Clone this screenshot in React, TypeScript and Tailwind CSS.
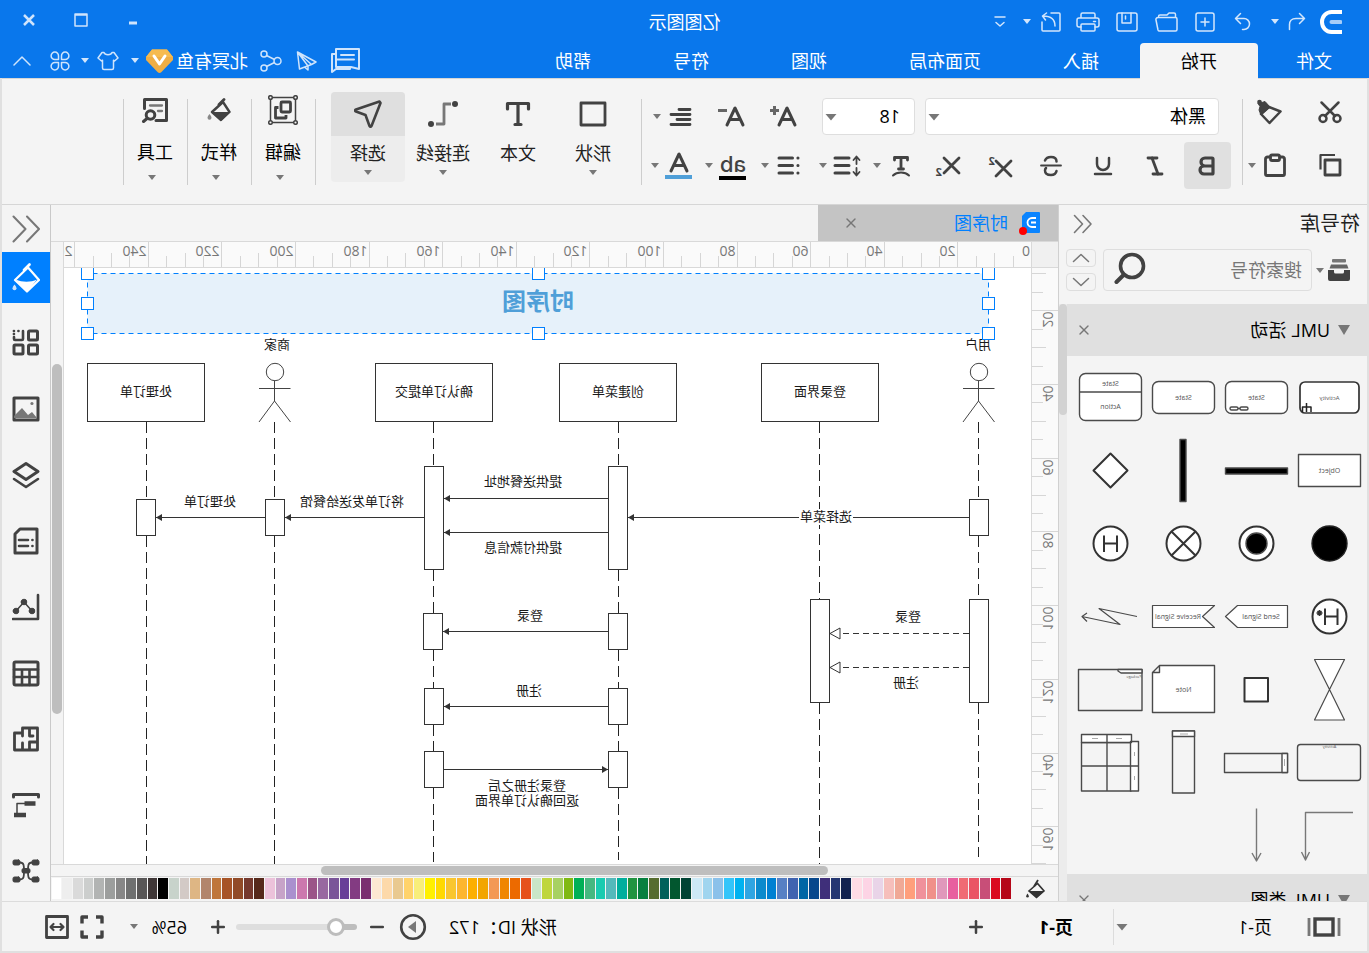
import React from "react";
import {
  Bold,
  Italic,
  Underline,
  X,
  Plus,
  Minus,
} from "lucide-react";

type Kids = { children?: React.ReactNode };

/* ---------- small shared pieces ---------- */

function Caret({ big = false, className = "fill-[#777]" }: { big?: boolean; className?: string }) {
  return big ? (
    <svg width="12" height="8" viewBox="0 0 12 8" className={className} aria-hidden="true">
      <path d="M.5 1h11L6 7.500z" />
    </svg>
  ) : (
    <svg width="8" height="5" viewBox="0 0 8 5" className={className} aria-hidden="true">
      <path d="M0 0h8L4 5z" />
    </svg>
  );
}

function Icon({
  w = 24,
  h = 24,
  sw = 1.5,
  children,
}: Kids & { w?: number; h?: number; sw?: number }) {
  return (
    <svg
      width={w}
      height={h}
      viewBox={`0 0 ${w} ${h}`}
      fill="none"
      stroke="currentColor"
      strokeWidth={sw}
      strokeLinecap="round"
      strokeLinejoin="round"
      aria-hidden="true"
      className="shrink-0"
    >
      {children}
    </svg>
  );
}

function Tool({ label, className = "", children }: Kids & { label: string; className?: string }) {
  return (
    <button type="button" aria-label={label} className={`flex shrink-0 items-center justify-center ${className}`}>
      {children}
    </button>
  );
}

/* ---------- title bar and menu ---------- */

function Header() {
  return (
    <header className="shrink-0 bg-[#0977ec] text-white">
      <div className="grid h-[43px] grid-cols-[1fr_auto_1fr] items-center">
        <div className="flex items-center pl-5 text-[#d3e6fc]">
          <div className="flex w-9 justify-center">
            <svg width="22" height="24" viewBox="0 0 22 24" fill="none" aria-hidden="true">
              <path d="M0 2h10.500a9.500 10 0 0 1 0 20H0" stroke="#fff" strokeWidth="4" />
              <path d="M1.500 12h9" stroke="#a6cdf8" strokeWidth="4" strokeLinecap="round" />
            </svg>
          </div>
          <Tool label="撤销" className="w-8">
            <Icon w={18} h={20}>
              <path d="M6.500 1.500 1.500 6.500l5 5M1.500 6.500H10c4.500 0 6.500 3 6.500 6v5" />
            </Icon>
          </Tool>
          <Tool label="撤销列表" className="w-3">
            <Caret className="fill-[#d3e6fc]" />
          </Tool>
          <Tool label="恢复" className="ml-2 w-9">
            <Icon w={18} h={20}>
              <path d="m11.500 1.500 5 5-5 5M16.500 6.500H8a5.500 5.500 0 0 0 0 11h1.500" />
            </Icon>
          </Tool>
          <Tool label="新建" className="w-[39px]">
            <Icon w={20} h={20}>
              <rect x="1" y="1" width="18" height="18" rx="2" />
              <path d="M10 6v8M6 10h8" />
            </Icon>
          </Tool>
          <Tool label="打开" className="w-[39px]">
            <Icon w={23} h={20}>
              <path d="M2.500 19a1.500 1.500 0 0 1-1.500-1.500V7a1.500 1.500 0 0 1 1.500-1.500H20a2 2 0 0 1 2 2.500l-2 10a1.500 1.500 0 0 1-1.500 1zM2.500 5.500V2.500A1.500 1.500 0 0 1 4 1h5l2 2h7a1.500 1.500 0 0 1 1.500 1.500v1" />
            </Icon>
          </Tool>
          <Tool label="保存" className="w-[39px]">
            <Icon w={22} h={20}>
              <rect x="1" y="1" width="20" height="18" rx="2" />
              <path d="M7 1v10h9V1M12.500 4v3" />
            </Icon>
          </Tool>
          <Tool label="打印" className="w-[39px]">
            <Icon w={24} h={20}>
              <path d="M5 6V2.500A1.500 1.500 0 0 1 6.500 1h11A1.500 1.500 0 0 1 19 2.500V6M5 15H3a2 2 0 0 1-2-2V8a2 2 0 0 1 2-2h18a2 2 0 0 1 2 2v5a2 2 0 0 1-2 2h-2M4.500 9.500h2" />
              <rect x="5" y="12" width="14" height="7" rx="1" />
            </Icon>
          </Tool>
          <Tool label="导出" className="w-9">
            <Icon w={20} h={20}>
              <path d="M10 1H2a1 1 0 0 0-1 1v16a1 1 0 0 0 1 1h16a1 1 0 0 0 1-1v-8M6 14c0-7 4-10 12-10M14.500 1 18.500 4l-3 4" />
            </Icon>
          </Tool>
          <Tool label="导出列表" className="w-3">
            <Caret className="fill-[#d3e6fc]" />
          </Tool>
          <Tool label="自定义工具栏" className="w-[42px]">
            <Icon w={12} h={12}>
              <path d="M1 1h10M2 6.500l4 3.500 4-3.500" />
            </Icon>
          </Tool>
        </div>
        <h1 className="text-[18px] leading-6">亿图图示</h1>
        <div className="flex items-center justify-end self-start pr-[3px] text-[#cfe4fc]">
          <Tool label="最小化" className="h-10 w-[52px]">
            <Icon w={10} h={10} sw={3}>
              <path d="M1 8h8" strokeLinecap="butt" />
            </Icon>
          </Tool>
          <Tool label="最大化" className="h-[38px] w-[52px]">
            <Icon w={14} h={14} sw={1.5}>
              <path d="M1 1h12v12H1zM1 2h12" />
            </Icon>
          </Tool>
          <Tool label="关闭" className="h-[38px] w-[52px]">
            <Icon w={12} h={12} sw={2.5}>
              <path d="m1 1 10 10M11 1 1 11" strokeLinecap="butt" />
            </Icon>
          </Tool>
        </div>
      </div>

      <div className="flex h-[35px]">
        <nav className="flex text-[18px] leading-6">
          <a href="#file" className="flex items-center px-[37px]">文件</a>
          <a
            href="#home"
            aria-current="page"
            className="relative z-10 -mb-px ml-px flex items-center rounded-t-sm bg-[#f4f4f4] px-[41px] text-black"
          >
            开始
          </a>
          {["插入", "页面布局", "视图", "符号", "帮助"].map((t) => (
            <a key={t} href={`#${t}`} className="flex items-center px-[41px]">
              {t}
            </a>
          ))}
        </nav>
        <div className="ml-auto flex items-center pr-[3px] text-[#cfe4fc]">
          <Tool label="评论" className="w-[42px]">
            <Icon w={31} h={27} sw={2}>
              <path d="M2 2h23v18H10l-8 2zM26 7h3v18l-4-3H11v-1M7 8h13M7 12.500h17" />
            </Icon>
          </Tool>
          <Tool label="发送" className="w-9">
            <Icon w={21} h={20}>
              <path d="M19.500 1 1 11l4.500 2.500L17.500 18zM19.500 1 5.500 13.500M19.500 1 9 15v4l3-2.500" />
            </Icon>
          </Tool>
          <Tool label="共享" className="w-9">
            <Icon w={22} h={22}>
              <circle cx="4.500" cy="11" r="3.500" />
              <circle cx="18" cy="4" r="3" />
              <circle cx="18" cy="18" r="3" />
              <path d="M7.500 9.500 15.500 5.500M7.500 12.500l8 4" />
            </Icon>
          </Tool>
          <button type="button" className="ml-[5px] flex items-center gap-[3px] text-white">
            <span className="text-[18px] leading-6">北冥有鱼</span>
            <svg width="27" height="24" viewBox="0 0 27 24" aria-hidden="true">
              <path d="M6 .5h15l6 7.500v3L15.500 23a3 3 0 0 1-4 0L0 11V8z" fill="#efae45" />
              <path d="M6 .5h15l6 7.500H0z" fill="#f6bb50" />
              <path d="m8 7 5.500 8L19 7" fill="none" stroke="#fff" strokeWidth="3" strokeLinecap="round" strokeLinejoin="round" />
            </svg>
          </button>
          <Tool label="账户列表" className="ml-[5px] w-3">
            <Caret className="fill-[#d3e6fc]" />
          </Tool>
          <Tool label="皮肤" className="ml-1 w-[34px]">
            <Icon w={22} h={20}>
              <path d="M7 1.500c1 3 7 3 8 0l2 0L21 7l-3.500 3-1-.8V17a1.500 1.500 0 0 1-1.500 1.500H7A1.500 1.500 0 0 1 5.500 17V9.200l-1 .8L1 7l4-5.500z" />
            </Icon>
          </Tool>
          <Tool label="皮肤列表" className="w-3">
            <Caret className="fill-[#d3e6fc]" />
          </Tool>
          <Tool label="应用" className="w-[38px]">
            <Icon w={20} h={20}>
              <path d="M8.500 8.500H5A3.700 3.700 0 1 1 8.500 5zM11.500 8.500H15A3.700 3.700 0 1 0 11.500 5zM8.500 11.500H5A3.700 3.700 0 1 0 8.500 15zM11.500 11.500H15A3.700 3.700 0 1 1 11.500 15z" />
            </Icon>
          </Tool>
          <Tool label="收起功能区" className="w-[38px]">
            <Icon w={18} h={10}>
              <path d="m1 9 8-8 8 8" />
            </Icon>
          </Tool>
        </div>
      </div>
    </header>
  );
}

/* ---------- ribbon ---------- */

function Divider() {
  return <div className="mt-[20px] h-[86px] w-px shrink-0 bg-[#cdcdcd]" />;
}

function Split({ label, className = "", children }: Kids & { label: string; className?: string }) {
  return (
    <div className={`flex items-center ${className}`}>
      <Tool label={label} className="h-9 w-9">
        {children}
      </Tool>
      <Tool label={`${label}选项`} className="h-9 w-3">
        <Caret />
      </Tool>
    </div>
  );
}

function BigTool({
  label,
  active = false,
  caret = true,
  children,
}: Kids & { label: string; active?: boolean; caret?: boolean }) {
  return (
    <button
      type="button"
      className={`flex h-[90px] w-[74px] flex-col items-center rounded-sm ${active ? "bg-[#ededed]" : ""}`}
    >
      <span className={`flex h-11 w-full items-center justify-center rounded-t-sm ${active ? "bg-[#dfdfdf]" : ""}`}>
        {children}
      </span>
      <span className="mt-[5px] text-[18px] leading-6 text-[#222]">{label}</span>
      {caret && (
        <span className="mt-[5px] flex">
          <Caret />
        </span>
      )}
    </button>
  );
}

function MenuTool({ label, children }: Kids & { label: string }) {
  return (
    <button type="button" className="flex h-[106px] w-[63px] flex-col items-center pt-[13px] pl-px">
      <span className="flex h-9 items-center justify-center">{children}</span>
      <span className="mt-[12px] text-[18px] leading-6 text-black">{label}</span>
      <span className="ml-1.5 mt-[11px] flex">
        <Caret />
      </span>
    </button>
  );
}

function Select({ label, value, className }: { label: string; value: string; className: string }) {
  return (
    <div className="relative flex h-[37px] items-center">
      <select
        aria-label={label}
        defaultValue={value}
        className={`h-full appearance-none rounded-sm border border-[#dedede] bg-white text-[18px] text-black ${className}`}
      >
        <option>{value}</option>
      </select>
      <span className="pointer-events-none absolute right-[3px] flex">
        <Caret big />
      </span>
    </div>
  );
}

function LetterA() {
  return (
    <svg width="20" height="21" viewBox="0 0 20 21" fill="none" stroke="currentColor" strokeWidth="3" strokeLinecap="round" strokeLinejoin="round" aria-hidden="true">
      <path d="M2 19 10 2l8 17M5.500 13.500h9" />
    </svg>
  );
}

function Ribbon() {
  return (
    <section aria-label="开始" className="flex h-[127px] shrink-0 border-b border-t border-[#d6d6d6] bg-[#f4f4f4] text-[#424242]">
      <div className="flex w-[124px] shrink-0 flex-col gap-[7px] pl-[15px] pt-[14px]">
        <div className="flex h-[37px] items-center gap-4">
          <Tool label="剪切" className="w-11">
            <Icon w={24} h={24} sw={2.5}>
              <circle cx="5" cy="18.500" r="3.500" />
              <circle cx="19" cy="18.500" r="3.500" />
              <path d="M3.500 2.500 17 16M20.500 2.500 7 16" />
            </Icon>
          </Tool>
          <Tool label="格式刷" className="w-11">
            <svg width="26" height="26" viewBox="0 0 26 26" fill="none" stroke="currentColor" aria-hidden="true">
              <path d="M2.500 12.500 14 8l8 7-8.500 9z" strokeWidth="2.500" strokeLinejoin="round" />
              <path d="m13 8 5-5.500 3 1 2.500-1.500 1.500 2.500-2 3 1 3.500-2 5z" fill="currentColor" strokeLinejoin="round" />
              <circle cx="23.500" cy="3" r="2.300" fill="currentColor" stroke="none" />
            </svg>
          </Tool>
        </div>
        <div className="flex h-[54px] items-center gap-4 pt-0.5">
          <Tool label="复制" className="w-11">
            <Icon w={24} h={24} sw={2.8}>
              <rect x="2" y="7" width="15" height="15" />
              <path d="M7 2h14.500v14.500" strokeLinecap="butt" strokeWidth="2.200" />
            </Icon>
          </Tool>
          <div className="flex">
            <Tool label="粘贴" className="w-[34px]">
              <Icon w={24} h={24} sw={2.8}>
                <path d="M7 4H4.500A2 2 0 0 0 2.500 6v15a1.500 1.500 0 0 0 1.500 1.500h16a1.500 1.500 0 0 0 1.500-1.500V6a2 2 0 0 0-2-2H17" />
                <rect x="7.500" y="2" width="9" height="5.500" rx="1.500" />
              </Icon>
            </Tool>
            <Tool label="粘贴选项" className="w-3">
              <Caret />
            </Tool>
          </div>
        </div>
      </div>
      <Divider />

      <div className="flex w-[600px] shrink-0 flex-col gap-[7px] pl-[11px] pt-[19px]">
        <div className="flex h-[37px] items-center pl-[12px]">
          <Select label="字体" value="黑体" className="w-[294px] px-3" />
          <div className="w-[10px]" />
          <Select label="字号" value="18" className="w-[93px] px-3.5" />
          <Tool label="增大字号" className="ml-[12px] w-[52px]">
            <LetterA />
            <span className="-ml-0.5 mb-3 flex text-[#666]">
              <Icon w={9} h={9} sw={3}>
                <path d="M4.500 0v9M0 4.500h9" strokeLinecap="butt" />
              </Icon>
            </span>
          </Tool>
          <Tool label="减小字号" className="w-[52px]">
            <LetterA />
            <span className="-ml-0.5 mb-3 flex text-[#666]">
              <Icon w={9} h={9} sw={3}>
                <path d="M0 4.500h9" strokeLinecap="butt" />
              </Icon>
            </span>
          </Tool>
          <Split label="对齐" className="ml-[7px]">
            <Icon w={24} h={20} sw={2.8}>
              <path d="M3 2.500h11M3 7.500h19M3 12.500h13M3 17.500h19" />
            </Icon>
          </Split>
        </div>
        <div className="flex h-[47px] items-center">
          <Tool label="加粗" className="h-[47px] w-[47px] rounded-sm bg-[#e0e0e0]">
            <Bold size={24} strokeWidth={3.2} />
          </Tool>
          <Tool label="倾斜" className="ml-[3px] w-[52px]">
            <Italic size={24} strokeWidth={2.8} />
          </Tool>
          <Tool label="下划线" className="w-[52px]">
            <Underline size={24} strokeWidth={2.5} />
          </Tool>
          <Tool label="删除线" className="w-[52px]">
            <Icon w={24} h={22} sw={2.5}>
              <path d="M18 5.500c-1-2.500-3-3.500-6-3.500-3.500 0-5.500 1.500-5.500 4.500M6.500 16c.5 2.500 2.500 4 5.500 4 3.500 0 6-1.500 6-4.500 0-1-.5-2-1-2.500" />
              <path d="M2 10.500h20" strokeWidth="1.800" />
            </Icon>
          </Tool>
          <Tool label="上标" className="w-[52px]">
            <svg width="32" height="26" viewBox="0 0 32 26" fill="currentColor" aria-hidden="true">
              <path d="m4 8 15 15M19 8 4 23" stroke="currentColor" strokeWidth="2.800" strokeLinecap="round" />
              <text x="20" y="12" fontSize="11" fontWeight="700">2</text>
            </svg>
          </Tool>
          <Tool label="下标" className="w-[52px]">
            <svg width="32" height="28" viewBox="0 0 32 28" fill="currentColor" aria-hidden="true">
              <path d="m4 6 15 15M19 6 4 21" stroke="currentColor" strokeWidth="2.800" strokeLinecap="round" />
              <text x="21" y="24" fontSize="11" fontWeight="700">2</text>
            </svg>
          </Tool>
          <Split label="文字方向" className="ml-0.5">
            <Icon w={20} h={22} sw={2.8}>
              <path d="M3.500 5V2.500h13V5M10 2.500v11M7.500 14h5" />
              <path d="M2 20.500c4-4 12-4 16 0" strokeWidth="2" />
            </Icon>
          </Split>
          <Split label="行距" className="ml-1.5">
            <Icon w={28} h={24} sw={3}>
              <path d="M12 4H26M12 11.500H26M12 19H26" />
              <path d="M4.500 10V3M1.500 6l3-3.500 3 3.500M4.500 14v7M1.500 18l3 3.500 3-3.500" strokeWidth="1.800" />
            </Icon>
          </Split>
          <Split label="项目符号" className="ml-2.5">
            <Icon w={24} h={22} sw={3}>
              <path d="M3 3h.1M3 10.500h.1M3 18h.1M8.500 3H22M8.500 10.500H22M8.500 18H22" />
            </Icon>
          </Split>
          <Split label="突出显示" className="ml-2">
            <span className="flex flex-col items-center">
              <span className="font-['Inter','Liberation_Sans',sans-serif] text-[22px] font-medium leading-6">ab</span>
              <span className="h-1 w-[27px] bg-black" />
            </span>
          </Split>
          <Split label="字体颜色" className="ml-1.5">
            <span className="flex flex-col items-center gap-[2px]">
              <LetterA />
              <span className="h-1 w-[27px] bg-[#4f9fd8]" />
            </span>
          </Split>
        </div>
      </div>
      <Divider />

      <div className="flex shrink-0 gap-px pl-[11px] pr-[15px] pt-[13px]">
        <BigTool label="形状">
          <svg width="28" height="26" viewBox="0 0 28 26" fill="none" stroke="currentColor" strokeWidth="2.800" strokeLinejoin="round" aria-hidden="true">
            <path d="M2 2h24v22H2z" />
          </svg>
        </BigTool>
        <BigTool label="文本" caret={false}>
          <Icon w={26} h={26} sw={3.2}>
            <path d="M2.500 8V2.500h21V8M13 2.500v21M10 23.500h6" />
          </Icon>
        </BigTool>
        <BigTool label="连接线">
          <svg width="32" height="28" viewBox="0 0 32 28" fill="none" aria-hidden="true">
            <path d="M8 4h7v20h8" stroke="#777" strokeWidth="2.800" strokeLinejoin="round" />
            <circle cx="4" cy="4" r="3" fill="currentColor" />
            <circle cx="28" cy="24" r="3" fill="currentColor" />
          </svg>
        </BigTool>
        <BigTool label="选择" active>
          <Icon w={28} h={28} sw={2.6}>
            <path d="M2.500 1.500 26 9.500c1.200.5 1.200 1.500 0 2L16.500 15l-4 11c-.5 1-1.500 1-2 0L1.500 3z" />
          </Icon>
        </BigTool>
      </div>
      <Divider />
      <MenuTool label="编辑">
        <svg width="30" height="30" viewBox="0 0 30 30" fill="none" stroke="currentColor" aria-hidden="true">
          <path d="M2.500 2.500h25v25h-25z" strokeWidth="1.500" />
          <g fill="#f4f4f4" strokeWidth="1.500">
            <circle cx="2.500" cy="2.500" r="1.800" />
            <circle cx="27.500" cy="2.500" r="1.800" />
            <circle cx="2.500" cy="27.500" r="1.800" />
            <circle cx="27.500" cy="27.500" r="1.800" />
          </g>
          <rect x="7.500" y="7" width="9.500" height="10" rx="1" strokeWidth="2.800" />
          <path d="M12 20v3h10.500V12.500h-3" strokeWidth="2.800" strokeLinejoin="round" />
        </svg>
      </MenuTool>
      <Divider />
      <MenuTool label="样式">
        <svg width="24" height="24" viewBox="0 0 24 24" aria-hidden="true">
          <path d="M8 4 19 14l-9 8-8.500-8z" fill="none" stroke="currentColor" strokeWidth="2.400" strokeLinejoin="round" />
          <path d="M7 1.500 12 6.500" stroke="currentColor" strokeWidth="2.800" strokeLinecap="round" />
          <path d="M1.500 14H19L10 23z" fill="currentColor" />
          <path d="M21.500 16c1.500 2 2 3 2 3.800a2 2 0 0 1-4 0c0-.8.5-1.800 2-3.800z" fill="#888" />
        </svg>
      </MenuTool>
      <Divider />
      <MenuTool label="工具">
        <Icon w={28} h={26} sw={3}>
          <path d="M13 23.500H2.500v-21h22v9" />
          <path d="M7 8.500h12M7 14h4" stroke="#777" strokeWidth="2.300" />
          <circle cx="18.500" cy="18" r="4.300" />
          <path d="m22 21.500 3.500 3" />
        </Icon>
      </MenuTool>
      <Divider />
    </section>
  );
}

/* ---------- symbol library ---------- */

function Cell({ label, children }: Kids & { label: string }) {
  return (
    <button type="button" aria-label={label} className="h-[73px] w-[73px]">
      <svg
        width="73"
        height="73"
        viewBox="0 0 73 73"
        fill="#fff"
        stroke="#4a4a4a"
        strokeWidth="1.400"
        strokeLinejoin="round"
        aria-hidden="true"
      >
        {children}
      </svg>
    </button>
  );
}

function Tiny({ x = 36.5, y = 39, size = 7, children }: Kids & { x?: number; y?: number; size?: number }) {
  return (
    <text x={x} y={y} fontSize={size} textAnchor="middle" fill="#555" stroke="none">
      {children}
    </text>
  );
}

function Symbols() {
  return (
    <div className="grid grid-cols-[repeat(4,73px)] pb-0.5 pl-px pt-[5px]">
      <Cell label="Activity">
        <rect x="7" y="21" width="59" height="31" rx="5" stroke="#333" strokeWidth="1.700" />
        <Tiny size={6}>Activity</Tiny>
        <path d="M59.500 42v9M55 51v-5h8.500v5" fill="none" stroke="#222" strokeWidth="1.500" />
      </Cell>
      <Cell label="State">
        <rect x="5.500" y="20.500" width="62" height="32" rx="6" />
        <Tiny>State</Tiny>
        <rect x="45" y="46" width="8" height="3" rx="1.500" />
        <rect x="55" y="46" width="8" height="3" rx="1.500" />
        <path d="M53 47.500h2" />
      </Cell>
      <Cell label="State">
        <rect x="5.500" y="20.500" width="62" height="32" rx="6" />
        <Tiny>State</Tiny>
      </Cell>
      <Cell label="State Action">
        <rect x="5.500" y="12.500" width="62" height="47" rx="6" />
        <path d="M5.500 31h62" />
        <Tiny y={25}>State</Tiny>
        <Tiny y={48}>Action</Tiny>
      </Cell>

      <Cell label="Object">
        <path d="M5.500 20.500h62v32h-62z" />
        <Tiny>Object</Tiny>
      </Cell>
      <Cell label="水平同步条">
        <path d="M5.500 34h62v6h-62z" fill="#000" />
      </Cell>
      <Cell label="垂直同步条">
        <path d="M34 5.500h6v62h-6z" fill="#000" />
      </Cell>
      <Cell label="判断">
        <path d="m36.500 19.500 17 17-17 17-17-17z" stroke="#333" strokeWidth="2" />
      </Cell>

      <Cell label="初始">
        <circle cx="36.500" cy="36.500" r="17.500" fill="#000" stroke="#222" />
      </Cell>
      <Cell label="结束">
        <circle cx="36.500" cy="36.500" r="17" stroke="#333" strokeWidth="2" />
        <circle cx="36.500" cy="36.500" r="10.500" fill="#000" />
      </Cell>
      <Cell label="流结束">
        <circle cx="36.500" cy="36.500" r="17" stroke="#333" strokeWidth="2" />
        <path d="m24.500 24.500 24 24M48.500 24.500l-24 24" stroke="#333" strokeWidth="2" />
      </Cell>
      <Cell label="历史">
        <circle cx="36.500" cy="36.500" r="17" stroke="#333" strokeWidth="2" />
        <path d="M30 28.500v16.500M43 28.500v16.500M30 36.500h13" stroke="#333" strokeWidth="2" />
      </Cell>

      <Cell label="深度历史">
        <circle cx="36.500" cy="36.500" r="17" stroke="#333" strokeWidth="2" />
        <path d="M28.500 28.500v16.500M41 28.500v16.500M28.500 36.500H41" stroke="#333" strokeWidth="2" />
        <path d="M46.500 30v6M43.500 33h6M44.500 31l4 4M48.500 31l-4 4" stroke="#333" strokeWidth="1.500" />
      </Cell>
      <Cell label="Send Signal">
        <path d="M5.500 25.500h50l12 11-12 11h-50z" strokeWidth="1.200" />
        <Tiny x={32} y={39}>Send Signal</Tiny>
      </Cell>
      <Cell label="Receive Signal">
        <path d="M5.500 25.500h62v22h-62l12-11z" strokeWidth="1.200" />
        <Tiny x={42} y={39}>Receive Signal</Tiny>
      </Cell>
      <Cell label="闪电线">
        <path d="m10 36.500 38-8-21 16 38-8M60 33l5 3.500-5 5" fill="none" strokeWidth="1.200" />
      </Cell>

      <Cell label="沙漏">
        <path d="M21.500 6.500h30L36.500 36.500l15 30.500h-30l15-30.500z" strokeWidth="1.200" />
      </Cell>
      <Cell label="引脚">
        <path d="M25 25h23.500v23.500H25z" stroke="#333" strokeWidth="2" />
      </Cell>
      <Cell label="Note">
        <path d="M5.500 12.500h55l7 7v40h-62zM60.500 12.500v7h7" />
        <Tiny>Note</Tiny>
      </Cell>
      <Cell label="Package">
        <path d="M5 16.500h63.500v41H5z" fill="none" />
        <path d="M5 16.500h24v1.500l-3 2H5z" />
        <Tiny x={13} y={25} size={4}>Package</Tiny>
      </Cell>

      <Cell label="活动区">
        <rect x="5.500" y="18.500" width="63" height="36" rx="3" fill="none" />
        <Tiny y={22} size={4}>Activity</Tiny>
      </Cell>
      <Cell label="水平泳道">
        <path d="M5.500 27.500h63v19h-63z" fill="none" />
        <path d="M5.500 27.500H11v19H5.500z" />
        <path d="M8.500 33v7" stroke="#aaa" strokeWidth="1" />
      </Cell>
      <Cell label="垂直泳道">
        <path d="M25.500 5h22v62h-22z" fill="none" />
        <path d="M25.500 5h22v5.500h-22z" />
        <path d="M32 8h8" stroke="#aaa" strokeWidth="1" />
      </Cell>
      <Cell label="网格泳道">
        <path d="M16 16.500h49.500V65H16zM40 16.500V65M16 40h49.500" fill="none" />
        <path d="M15.500 8.500h50v8h-50zM8.500 15.500h8V65h-8zM40 8.500v8M8.500 40h8" />
        <path d="M25 12.500h6M49 12.500h6M12.500 26v4M12.500 50v4" stroke="#aaa" strokeWidth="1" />
      </Cell>

      <Cell label="折线箭头">
        <path d="M13 13.500h47.500v46M56.500 53l4 8 4-8" fill="none" stroke="#777" />
      </Cell>
      <Cell label="直线箭头">
        <path d="M36.500 9.500V62M32 54l4.500 8 4.500-8" fill="none" stroke="#777" />
      </Cell>
    </div>
  );
}

function SectionHeader({ title }: { title: string }) {
  return (
    <div className="flex h-[52px] items-center bg-[#e0e0e0] pl-[16px] pr-[9px]">
      <button type="button" className="flex items-center gap-[7px] text-[18px] leading-6 text-black">
        <svg width="14" height="10" viewBox="0 0 14 10" aria-hidden="true">
          <path d="M1 0h12L7 10z" fill="#777" />
        </svg>
        {title}
      </button>
      <Tool label={`关闭${title}`} className="ml-auto">
        <X size={16} strokeWidth={2} className="text-[#777]" />
      </Tool>
    </div>
  );
}

function Library() {
  return (
    <aside className="flex w-[309px] shrink-0 flex-col border-r border-[#d0d0d0]">
      <div className="flex h-[38px] shrink-0 items-center justify-between pl-[7px] pr-[14px]">
        <h2 className="text-[20px] leading-6 text-[#222]">符号库</h2>
        <button type="button" aria-label="收起符号库" className="text-[#777]">
          <Icon w={20} h={20} sw={1.6}>
            <path d="M10 1.500 2 10l8 8.500M18.500 1.500 10.500 10l8 8.500" />
          </Icon>
        </button>
      </div>
      <div className="mt-[6px] flex h-[42px] shrink-0 items-center pl-[16px]">
        <button type="button" aria-label="符号库列表" className="flex items-center gap-[3px]">
          <svg width="24" height="24" viewBox="0 0 24 24" fill="#424242" aria-hidden="true">
            <rect x="5" y="1" width="14" height="3.500" rx="1" fill="#777" />
            <path d="M4 6.500h16l1.500 4h-19z" fill="#666" />
            <path d="M1 12h6v2a1.500 1.500 0 0 0 1.500 1.500h7A1.500 1.500 0 0 0 17 14v-2h6v9a2 2 0 0 1-2 2H3a2 2 0 0 1-2-2z" />
          </svg>
          <Caret />
        </button>
        <label className="ml-[4px] flex h-full w-[209px] items-center rounded-sm border border-[#dedede] pl-[9px] pr-[10px]">
          <input
            type="text"
            aria-label="搜索符号"
            placeholder="搜索符号"
            className="w-0 flex-1 bg-transparent text-[18px] leading-6 outline-none placeholder:text-[#777]"
          />
          <svg width="32" height="34" viewBox="0 0 32 34" fill="none" stroke="#424242" strokeLinecap="round" className="-mt-1" aria-hidden="true">
            <circle cx="14" cy="15" r="11.500" strokeWidth="3.600" />
            <path d="m22.500 24 7 7" strokeWidth="4" />
          </svg>
        </label>
        <div className="ml-[7px] flex flex-col gap-[6px] text-[#777]">
          <Tool label="上一个" className="h-[18px] w-[30px] rounded-sm border border-[#dedede]">
            <Icon w={18} h={10}>
              <path d="m1.500 8.500 7.500-7 7.500 7" />
            </Icon>
          </Tool>
          <Tool label="下一个" className="h-[18px] w-[30px] rounded-sm border border-[#dedede]">
            <Icon w={18} h={10}>
              <path d="m1.500 1.500 7.500 7 7.500-7" />
            </Icon>
          </Tool>
        </div>
      </div>
      <div className="mt-[13px] flex min-h-0 flex-1">
        <div className="min-w-0 flex-1 overflow-hidden">
          <SectionHeader title="UML 活动" />
          <Symbols />
          <SectionHeader title="UML 类图" />
        </div>
        <div className="w-2 shrink-0 bg-[#ececec]">
          <div className="h-[111px] rounded-full bg-[#d2d2d2]" />
        </div>
      </div>
    </aside>
  );
}

/* ---------- rulers ---------- */

const H_STEP = 73.6;
const V_STEP = 73.7;

function HRuler() {
  const ticks = Array.from({ length: 54 }, (_, i) => i);
  return (
    <div className="h-[26px] overflow-hidden border-b border-[#d9d9d9] bg-[#fafafa]">
      <svg width="2000" height="25" aria-hidden="true">
        {ticks.map((i) => {
          const x = Math.round((i * H_STEP) / 4) - 0.5;
          const top = i % 4 === 0 ? 0 : i % 2 === 0 ? 11 : 14;
          return (
            <g key={i}>
              {i > 0 && <path d={`M${x} ${top}V25`} stroke="#d6d6d6" />}
              {i % 4 === 0 && (
                <text x={i === 0 ? 1 : x + 2} y="14" fontSize="14" fill="#777">
                  {i * 5}
                </text>
              )}
            </g>
          );
        })}
      </svg>
    </div>
  );
}

function VRuler() {
  const ticks = Array.from({ length: 33 }, (_, i) => i + 2);
  return (
    <div className="flex w-[27px] shrink-0 flex-col overflow-hidden border-r border-[#d9d9d9] bg-[#fafafa]">
      <div className="h-[26px] shrink-0 border-b border-[#d9d9d9] bg-[#f0f0f0]" />
      <div className="min-h-0 flex-1 overflow-hidden">
        <svg width="26" height="2000" aria-hidden="true">
          {ticks.map((i) => {
            const y = Math.round((i * V_STEP) / 4 - 31.4) + 0.5;
            const left = i % 4 === 0 ? 0 : i % 2 === 0 ? 12 : 15;
            return (
              <g key={i}>
                <path d={`M${left} ${y}H26`} stroke="#d6d6d6" />
                {i % 4 === 0 && (
                  <text transform={`translate(15 ${y + 1}) rotate(-90)`} textAnchor="end" fontSize="14" fill="#777">
                    {i * 5}
                  </text>
                )}
              </g>
            );
          })}
        </svg>
      </div>
    </div>
  );
}

/* ---------- sequence diagram ---------- */

const INK = "#333";

function Head({ x, y, w = 117, label }: { x: number; y: number; w?: number; label: string }) {
  return (
    <g>
      <rect x={x} y={y} width={w} height="58" fill="#fff" stroke={INK} shapeRendering="crispEdges" />
      <Label x={x + w / 2} y={y + 28}>{label}</Label>
    </g>
  );
}

function Label({ x, y, children }: Kids & { x: number; y: number }) {
  return (
    <text x={x} y={y + 4} fontSize="13" fill="#1a1a1a" textAnchor="middle">
      {children}
    </text>
  );
}

function Actor({ x, label, labelX }: { x: number; label: string; labelX: number }) {
  return (
    <g stroke="#444" fill="none">
      <circle cx={x - 0.5} cy="372" r="8.700" />
      <path d={`M${x} 381V401M${x - 16} 388.500H${x + 15.5}M${x - 16} 422L${x} 401L${x + 15.5} 422`} />
      <g stroke="none">
        <Label x={labelX} y={345}>{label}</Label>
      </g>
    </g>
  );
}

function Bar({ x, y, h = 36 }: { x: number; y: number; h?: number }) {
  return <rect x={x} y={y} width="19" height={h} fill="#fff" stroke={INK} shapeRendering="crispEdges" />;
}

function Life({ x, spans }: { x: number; spans: [number, number][] }) {
  return (
    <g stroke="#222" strokeDasharray="11 5">
      {spans.map(([a, b]) => (
        <path key={a} d={`M${x} ${a}V${b}`} />
      ))}
    </g>
  );
}

function Message({ from, to, y }: { from: number; to: number; y: number }) {
  const d = to > from ? -1 : 1;
  return (
    <g>
      <path d={`M${from} ${y}H${to}`} stroke={INK} />
      <path d={`M${to} ${y}l${6 * d} -3.500v7z`} fill={INK} />
    </g>
  );
}

function Reply({ from, to, y }: { from: number; to: number; y: number }) {
  return (
    <g stroke={INK} fill="#fff">
      <path d={`M${from} ${y}H${to - 11}`} strokeDasharray="6 4" />
      <path d={`M${to} ${y}l-10 -5.500v11z`} />
    </g>
  );
}

function Diagram() {
  const handles: [number, number][] = [
    [380.5, 273.5], [830.5, 273.5], [1281.5, 273.5],
    [380.5, 303.5], [1281.5, 303.5],
    [380.5, 333.5], [830.5, 333.5], [1281.5, 333.5],
  ];
  return (
    <svg width="967" height="596" viewBox="338 268 967 596" role="img" aria-label="时序图">
      <Life x={390.5} spans={[[422, 499], [536, 599], [703, 857]]} />
      <Life x={549.5} spans={[[422, 599], [703, 864]]} />
      <Life x={750.5} spans={[[422, 466], [570, 613], [650, 688], [725, 751], [788, 860]]} />
      <Life x={935.5} spans={[[422, 466], [570, 613], [650, 688], [725, 751], [788, 862]]} />
      <Life x={1094.5} spans={[[422, 499], [536, 864]]} />
      <Life x={1222.5} spans={[[422, 499], [536, 864]]} />

      <Actor x={390.5} labelX={391} label="用户" />
      <Head x={490.5} y={363.5} label="登录界面" />
      <Head x={692.5} y={363.5} label="创建菜单" />
      <Head x={876.5} y={363.5} label="确认订单提交" />
      <Actor x={1094.5} labelX={1092} label="商家" />
      <Head x={1164.5} y={363.5} label="处理订单" />

      <Bar x={380.5} y={499.5} />
      <Bar x={380.5} y={599.5} h={103} />
      <Bar x={539.5} y={599.5} h={103} />
      <Bar x={741.5} y={466.5} h={103} />
      <Bar x={925.5} y={466.5} h={103} />
      <Bar x={1084.5} y={499.5} />
      <Bar x={1213.5} y={499.5} />
      <Bar x={741.5} y={613.5} />
      <Bar x={926.5} y={613.5} />
      <Bar x={741.5} y={688.5} />
      <Bar x={925.5} y={688.5} />
      <Bar x={741.5} y={751.5} />
      <Bar x={925.5} y={751.5} />

      <Message from={400} to={741} y={517.5} />
      <rect x="516" y="509" width="54" height="16" fill="#fff" />
      <Label x={543} y={517}>选择菜单</Label>

      <Message from={761} to={925} y={498.5} />
      <Message from={761} to={925} y={532.5} />
      <Label x={846} y={482}>提供送餐地址</Label>
      <Label x={846} y={548}>提供付款信息</Label>

      <Message from={945} to={1084} y={517.5} />
      <Label x={1017} y={502}>将订单发送给餐馆</Label>
      <Message from={1104} to={1213} y={517.5} />
      <Label x={1159} y={502}>处理订单</Label>

      <Reply from={400} to={539} y={633.5} />
      <Reply from={400} to={539} y={667.5} />
      <Label x={461} y={617}>登录</Label>
      <Label x={463} y={683}>注册</Label>

      <Message from={761} to={926} y={631.5} />
      <Label x={839} y={616}>登录</Label>
      <Message from={761} to={925} y={706.5} />
      <Label x={840} y={691}>注册</Label>
      <Message from={925} to={761} y={769.5} />
      <Label x={842} y={786}>
        登录注册之后
        <tspan x="842" dy="15">返回确认订单界面</tspan>
      </Label>

      <rect x="380.500" y="273.500" width="901" height="60" fill="#e6f1fa" />
      <path d="M380.500 273.500h901M380.500 333.500h901M380.500 273.500v60M1281.500 273.500v60" stroke="#0080ff" strokeDasharray="5 4" />
      <text x="831" y="310" fontSize="24" fontWeight="700" fill="#4f9fd8" textAnchor="middle">时序图</text>
      {handles.map(([x, y]) => (
        <rect key={`${x}-${y}`} x={x - 6} y={y - 6} width="12" height="12" fill="#fff" stroke="#0080ff" />
      ))}
    </svg>
  );
}

/* ---------- palette ---------- */

const SWATCHES = (
  "b50618 da0a20 c84e78 ea5465 f06b74 e8609f e098bb f0908a f0919b ff9f7c f0a996 f6bfbb e9d4e8 fdd4e5 ffdce5 " +
  "12224f 253772 3f2f7a 07478c 0066a5 4063b0 5780c4 0080d2 0b8acd 2fa5e2 00b2f0 33c5fa 8bc1ea a0d5ef cde9f6 " +
  "004334 02572f 00605a 566c2f 07803f 219440 00ae9d 54b9bb 19cbb0 45b880 00b057 80b912 a7d162 bfd63c c9e6c8 " +
  "e6511c ec6a00 f08600 f39955 f2a500 fcaf00 fdb62f f9c62f ffd900 fff000 f8ee7a ffd36b e9c990 fdd9aa fde8d2 " +
  "7a2f70 833b82 683f98 7a5599 9868a0 9b5588 cc78ae aa90ce c7a3c8 ecc2da 56291b 75392e 914b28 a75427 bf763b " +
  "b2856c deb684 d3cac6 c8d3cb 000000 3f3737 585656 6f7070 878787 9c9e9d b2b4b3 cccecd dadada eeeeee ffffff"
).split(" ");

function Palette() {
  return (
    <div className="flex h-6 shrink-0 bg-[#f4f4f4]">
      <button type="button" aria-label="填充颜色" className="flex w-[47px] shrink-0 items-center justify-center pr-1">
        <svg width="20" height="20" viewBox="0 0 20 20" aria-hidden="true">
          <path d="m8.500 4.500 8.500 7.500-7.500 6.500-7.500-6.500z" fill="none" stroke="#333" strokeWidth="1.600" />
          <path d="M2 12h15L9.500 19z" fill="#333" />
          <path d="m8 1 4 6.500" stroke="#333" strokeWidth="1.800" />
          <path d="M18.500 14.500c1 1.500 1.300 2 1.300 2.700a1.300 1.300 0 0 1-2.600 0c0-.7.300-1.200 1.300-2.700z" fill="#333" />
        </svg>
      </button>
      <div className="flex min-w-0 flex-1 gap-px pt-px">
        {SWATCHES.map((c) => (
          <button key={c} type="button" aria-label={`#${c}`} className="h-[21px] min-w-0 flex-1" style={{ backgroundColor: `#${c}` }} />
        ))}
      </div>
      <div className="w-px" />
    </div>
  );
}

/* ---------- workspace ---------- */

function Workspace() {
  return (
    <main className="flex min-w-0 flex-1 flex-col">
      <div className="flex h-[37px] shrink-0 border-b border-[#d9d9d9]">
        <div className="flex w-[240px] items-center bg-[#c4c4c4] pl-[17px] pr-[25px]">
          <svg width="22" height="24" viewBox="0 0 22 24" aria-hidden="true">
            <path d="M2 1h13l4 4v16a1 1 0 0 1-1 1H2a1 1 0 0 1-1-1V2a1 1 0 0 1 1-1z" fill="#0a84ff" />
            <path d="M5 7h4a4.500 4.500 0 0 1 0 9H5M5 11.500h5" fill="none" stroke="#fff" strokeWidth="1.800" />
            <circle cx="18" cy="20" r="4" fill="#f00" />
          </svg>
          <span className="ml-[11px] text-[18px] leading-6 text-[#0080ff]">时序图</span>
          <Tool label="关闭时序图" className="ml-auto">
            <X size={16} strokeWidth={2} className="text-[#777]" />
          </Tool>
        </div>
      </div>
      <div className="flex min-h-0 flex-1">
        <VRuler />
        <div className="flex min-w-0 flex-1 flex-col">
          <HRuler />
          <div className="min-h-0 flex-1 overflow-hidden bg-white">
            <Diagram />
          </div>
        </div>
        <div className="flex w-[13px] shrink-0 justify-center border-l border-[#d9d9d9] pt-[122px]">
          <div className="h-[350px] w-[10px] rounded-full bg-[#bebebe]" />
        </div>
      </div>
      <div className="flex h-[13px] shrink-0 items-center border-y border-[#d9d9d9] pl-[230px]">
        <div className="h-[9px] w-[507px] rounded-full bg-[#bebebe]" />
      </div>
      <Palette />
    </main>
  );
}

/* ---------- property sidebar ---------- */

function SideIcon({ label, children }: Kids & { label: string }) {
  return (
    <Tool label={label} className="h-[66px] w-full text-[#424242]">
      <Icon w={28} h={28} sw={3}>
        {children}
      </Icon>
    </Tool>
  );
}

function Sidebar() {
  return (
    <aside className="flex w-[49px] shrink-0 flex-col overflow-hidden border-l border-[#c9c9c9]">
      <Tool label="展开面板" className="h-[47px] w-full text-[#777]">
        <Icon w={28} h={28} sw={2}>
          <path d="M13 1.500 1 14l12 12.500M26.500 1.500 14.500 14l12 12.500" />
        </Icon>
      </Tool>
      <Tool label="填充" className="h-[51px] w-full bg-[#0080ff] text-white">
        <svg width="28" height="30" viewBox="0 0 28 30" aria-hidden="true">
          <path d="M12 4.500 25 17 13 28.500 1 17z" fill="none" stroke="#fff" strokeWidth="2.200" strokeLinejoin="round" />
          <path d="M10.500 1.500 16 7" stroke="#fff" strokeWidth="2.600" strokeLinecap="round" />
          <path d="M3 16.500c6 3 15 3 21 0L13 29z" fill="#fff" />
          <path d="M25.500 21.500c1.500 2 2 3 2 3.800a2 2 0 0 1-4 0c0-.8.500-1.800 2-3.800z" fill="#cfe4fc" />
        </svg>
      </Tool>
      <div className="flex flex-col pt-[7px]">
        <SideIcon label="组件">
          <rect x="2.500" y="2" width="9" height="9" rx="1" />
          <rect x="2.500" y="16" width="9" height="9" rx="1" />
          <rect x="17" y="16" width="9" height="9" rx="1" />
          <path d="M17 2v8a1 1 0 0 0 1 1h7a1 1 0 0 0 1-1V8M21.500 2h.1M26 2h.1M26 5h.1" strokeWidth="2.600" />
        </SideIcon>
        <SideIcon label="图片">
          <path d="M2 3h24v22H2z" />
          <path d="m3 23 5-6 4 3 6-7 8 8v2z" fill="#777" stroke="none" />
          <path d="M8 8.500h.1" stroke="#777" />
        </SideIcon>
        <SideIcon label="图层">
          <path d="M14 2.500 26 10.500 14 18.500 2 10.500z" />
          <path d="M2 18 14 26 26 18" strokeWidth="2.600" />
        </SideIcon>
        <SideIcon label="页面">
          <path d="M3 2h17l5 5v19H3z" />
          <path d="M7.500 13h.1M12 13h9M7.500 19h.1M12 19h9" strokeWidth="2.600" />
        </SideIcon>
        <SideIcon label="图表">
          <path d="M2 2v24H27" strokeWidth="2.600" />
          <path d="m8 18 8-9 8 9" strokeWidth="1.500" />
          <g fill="currentColor" strokeWidth="1">
            <circle cx="8" cy="18" r="2.800" />
            <circle cx="16" cy="9" r="2.800" />
            <circle cx="24" cy="18" r="2.800" />
          </g>
        </SideIcon>
        <SideIcon label="表格">
          <rect x="2" y="3" width="24" height="23" rx="1.500" />
          <path d="M2 10.500h24M2 18h24M10.500 10.500V26M18 10.500V26" strokeWidth="2.600" />
        </SideIcon>
        <SideIcon label="平面图">
          <path d="M2.500 3h15v5h8v17h-23zM10.500 3v8M10.500 11H7M17.500 8v3M2.500 17h8v8M17.500 18v7" strokeWidth="2.800" />
        </SideIcon>
        <SideIcon label="甘特图">
          <path d="M1.500 6V3.500h25V6" />
          <path d="M4.500 12.500h11M14 24h12" strokeWidth="4.500" strokeLinecap="butt" />
          <path d="M15 12.500h8V23" strokeWidth="1.500" />
        </SideIcon>
        <SideIcon label="思维导图">
          <g fill="currentColor" strokeWidth="1">
            <rect x="1" y="3" width="7" height="5" rx="1.500" />
            <rect x="20" y="3" width="7" height="5" rx="1.500" />
            <rect x="1" y="20" width="7" height="5" rx="1.500" />
            <rect x="20" y="20" width="7" height="5" rx="1.500" />
            <rect x="10" y="11.500" width="8" height="4.500" rx="1.500" />
          </g>
          <path d="M8 5.500c4 0 4 3 4 8.500s0 8.500-4 8.500M20 5.500c-4 0-4 3-4 8.500s0 8.500 4 8.500" strokeWidth="1.800" />
        </SideIcon>
      </div>
    </aside>
  );
}

/* ---------- status bar ---------- */

function Footer() {
  return (
    <footer className="flex h-[52px] shrink-0 items-center border-b-2 border-t border-b-[#e0e0e0] border-t-[#dcdcdc] bg-[#f4f4f4] text-[18px] leading-6 text-black">
      <Tool label="页面视图" className="ml-[25px] w-9">
        <svg width="34" height="20" viewBox="0 0 34 20" fill="none" aria-hidden="true">
          <rect x="8" y="2" width="18" height="16" stroke="#424242" strokeWidth="3.400" />
          <path d="M2 1v18M32 1v18" stroke="#777" strokeWidth="2.800" />
        </svg>
      </Tool>
      <div className="ml-[34px] flex w-[156px] items-center justify-between">
        <button type="button">页-1</button>
        <Tool label="页面列表" className="w-3">
          <Caret big />
        </Tool>
      </div>
      <div className="ml-[2px] h-9 w-px bg-[#dcdcdc]" />
      <button type="button" aria-current="page" className="ml-[40px] w-[87px] text-left font-bold">页-1</button>
      <Tool label="添加页面" className="w-5 text-[#424242]">
        <Plus size={20} strokeWidth={3} />
      </Tool>
      <div className="ml-auto flex items-center text-[#424242]">
        <span className="whitespace-pre text-black">形状 ID：172</span>
        <Tool label="播放" className="ml-[22px] w-7">
          <svg width="28" height="28" viewBox="0 0 28 28" aria-hidden="true">
            <circle cx="14" cy="14" r="11.800" fill="none" stroke="#424242" strokeWidth="2.600" />
            <path d="m11 8 8 6-8 6z" fill="#777" />
          </svg>
        </Tool>
        <Tool label="缩小" className="ml-[12px] w-5">
          <Minus size={20} strokeWidth={3} />
        </Tool>
        <input
          type="range"
          aria-label="缩放"
          min={0}
          max={100}
          defaultValue={12}
          className="ml-[10px] h-[6px] w-[121px] appearance-none rounded-full bg-[linear-gradient(to_right,#bdbdbd_18%,#dedede_18%)] [&::-webkit-slider-thumb]:h-[18px] [&::-webkit-slider-thumb]:w-[18px] [&::-webkit-slider-thumb]:appearance-none [&::-webkit-slider-thumb]:rounded-full [&::-webkit-slider-thumb]:border-[3px] [&::-webkit-slider-thumb]:border-[#bdbdbd] [&::-webkit-slider-thumb]:bg-white"
        />
        <Tool label="放大" className="ml-[8px] w-5">
          <Plus size={20} strokeWidth={3} />
        </Tool>
        <button type="button" className="ml-[21px] flex w-[57px] items-center justify-between text-black">
          65%
          <Caret />
        </button>
        <Tool label="全屏" className="ml-[24px] w-7">
          <Icon w={24} h={24} sw={3.4}>
            <path d="M2 8.500V2h6M16 2h6v6.500M22 15.500V22h-6M8 22H2v-6.500" strokeLinecap="butt" />
          </Icon>
        </Tool>
        <Tool label="适应宽度" className="ml-[7px] mr-[41px] w-7">
          <Icon w={24} h={24} sw={2.8}>
            <path d="M1.500 1.500h21v21h-21z" />
            <path d="M6 12h12M8.500 9 5.500 12l3 3M15.500 9l3 3-3 3" strokeWidth="2.200" />
          </Icon>
        </Tool>
      </div>
    </footer>
  );
}

export default function App() {
  return (
    <div className="flex h-screen -scale-x-100 flex-col overflow-hidden bg-[#f4f4f4] font-['Open_Sans','Noto_Sans_CJK_SC',sans-serif]">
      <Header />
      <div className="flex min-h-0 flex-1 flex-col border-x-2 border-[#e0e0e0]">
        <Ribbon />
        <div className="flex min-h-0 flex-1">
          <Library />
          <Workspace />
          <Sidebar />
        </div>
        <Footer />
      </div>
    </div>
  );
}
